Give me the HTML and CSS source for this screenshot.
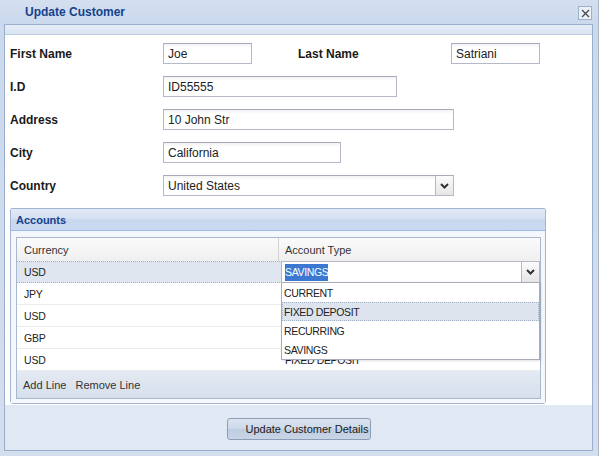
FILE: index.html
```html
<!DOCTYPE html>
<html>
<head>
<meta charset="utf-8">
<title>Update Customer</title>
<link rel="stylesheet" href="styles.css">
</head>
<body>
<div class="window">
  <div class="win-header">
    <span class="win-title">Update Customer</span>
    <span class="win-close"><svg width="9" height="9" viewBox="0 0 9 9"><path d="M1 1 L8 8 M8 1 L1 8" stroke="#4a4a4a" stroke-width="1.3" fill="none"/></svg></span>
  </div>
  <div class="win-body">
    <div class="strip"></div>
    <div class="form">
      <div class="row">
        <label class="lbl">First Name</label><div class="field w-short">Joe</div>
        <label class="lbl lbl-second">Last Name</label><div class="field w-short">Satriani</div>
      </div>
      <div class="row">
        <label class="lbl">I.D</label><div class="field w-id">ID55555</div>
      </div>
      <div class="row">
        <label class="lbl">Address</label><div class="field w-long">10 John Str</div>
      </div>
      <div class="row">
        <label class="lbl">City</label><div class="field w-city">California</div>
      </div>
      <div class="row">
        <label class="lbl">Country</label>
        <div class="field combo w-long"><span class="combo-text">United States</span><span class="trigger"><svg width="9" height="6" viewBox="0 0 9 6"><polyline points="1,1 4.5,4.5 8,1" stroke="#333" stroke-width="2" fill="none"/></svg></span></div>
      </div>
      <div class="panel">
        <div class="panel-head">Accounts</div>
        <div class="panel-body">
          <div class="grid">
            <div class="grid-head"><div class="col c1">Currency</div><div class="col c2">Account Type</div></div>
            <div class="grid-row selected">
              <div class="cell c1">USD</div>
              <div class="cell c2 editing">
                <div class="editor"><span class="editor-text"><span class="sel">SAVINGS</span></span><span class="trigger"><svg width="9" height="6" viewBox="0 0 9 6"><polyline points="1,1 4.5,4.5 8,1" stroke="#333" stroke-width="2" fill="none"/></svg></span></div>
                <div class="dropdown">
                  <div class="item">CURRENT</div>
                  <div class="item hover">FIXED DEPOSIT</div>
                  <div class="item">RECURRING</div>
                  <div class="item">SAVINGS</div>
                </div>
              </div>
            </div>
            <div class="grid-row"><div class="cell c1">JPY</div><div class="cell c2"></div></div>
            <div class="grid-row"><div class="cell c1">USD</div><div class="cell c2"></div></div>
            <div class="grid-row"><div class="cell c1">GBP</div><div class="cell c2"></div></div>
            <div class="grid-row"><div class="cell c1">USD</div><div class="cell c2">FIXED DEPOSIT</div></div>
            <div class="grid-tbar"><span>Add Line</span><span>Remove Line</span></div>
          </div>
        </div>
      </div>
    </div>
    <div class="footer"><button class="btn">Update Customer Details</button></div>
  </div>
</div>
</body>
</html>
```
FILE: styles.css
```css
body {
  margin: 0;
}
.window {
  width: 599px;
  height: 456px;
  box-sizing: border-box;
  background: linear-gradient(#d4dff0, #cbd9ed 24px, #d3deef);
  border-right: 1px solid #a9b4c4;
  display: flex;
  flex-direction: column;
  font-family: "Liberation Sans", Arial, sans-serif;
  color: #222;
}
.win-header {
  height: 24px;
  flex: none;
  display: flex;
  align-items: center;
  justify-content: space-between;
  padding: 0 6px 0 25px;
}
.win-title {
  font-weight: bold;
  font-size: 12px;
  color: #15428b;
}
.win-close {
  width: 14px;
  height: 14px;
  box-sizing: border-box;
  border: 1px solid #9fb0c8;
  background: #eaf0f8;
  display: flex;
  align-items: center;
  justify-content: center;
  margin-top: 2px;
}
.win-body {
  flex: 1;
  margin: 0 5px 5px 4px;
  border: 1px solid #99aecb;
  background: #fff;
  display: flex;
  flex-direction: column;
}
.strip {
  height: 9px;
  flex: none;
  background: linear-gradient(#e5ecf7, #dae4f2);
  border-bottom: 1px solid #b9cbe4;
}
.form {
  flex: 1;
  padding: 8px 0 0 5px;
  display: flex;
  flex-direction: column;
  gap: 12px;
}
.row {
  display: flex;
  align-items: center;
  height: 21px;
}
.lbl {
  width: 153px;
  flex: none;
  font-weight: bold;
  font-size: 12px;
  color: #1a1a1a;
}
.lbl-second {
  margin-left: 46px;
}
.field {
  height: 21px;
  box-sizing: border-box;
  border: 1px solid #b5b8c8;
  border-top-color: #a7aab8;
  background: linear-gradient(#f2f2f2, #fff 4px);
  font-size: 12px;
  padding-left: 4px;
  display: flex;
  align-items: center;
  color: #222;
}
.w-short { width: 89px; }
.w-id { width: 234px; }
.w-long { width: 291px; }
.w-city { width: 178px; }
.combo {
  padding-right: 0;
}
.combo-text {
  flex: 1;
}
.trigger {
  width: 17px;
  align-self: stretch;
  border-left: 1px solid #b5b8c8;
  background: linear-gradient(#fbfbfb, #e6e6e6);
  display: flex;
  align-items: center;
  justify-content: center;
}
.panel {
  width: 536px;
  height: 196px;
  box-sizing: border-box;
  border: 1px solid #a3b5ce;
  border-radius: 2px 2px 3px 3px;
  display: flex;
  flex-direction: column;
}
.panel-head {
  height: 22px;
  box-sizing: border-box;
  border-bottom: 1px solid #99bbe8;
  background: linear-gradient(#e1eaf7, #d5e1f2 45%, #c6d7ef 52%, #cadaf0);
  font-weight: bold;
  font-size: 11px;
  color: #15428b;
  padding-left: 5px;
  display: flex;
  align-items: center;
}
.panel-body {
  flex: 1;
  background: #f4f7fb;
  padding: 6px 4px 4px 5px;
}
.grid {
  height: 162px;
  box-sizing: border-box;
  border: 1px solid #a8b8cd;
  background: #fff;
  display: flex;
  flex-direction: column;
}
.grid-head {
  height: 24px;
  box-sizing: border-box;
  border-bottom: 1px solid #d0d0d0;
  background: linear-gradient(#fbfbfb, #efefef);
  display: flex;
  font-size: 11px;
  color: #333;
}
.col {
  display: flex;
  align-items: center;
}
.col.c1 {
  width: 262px;
  box-sizing: border-box;
  border-right: 1px solid #d3d3d3;
  padding-left: 7px;
}
.col.c2 {
  flex: 1;
  padding-left: 6px;
}
.grid-row {
  height: 22px;
  box-sizing: border-box;
  border-bottom: 1px solid #ececec;
  display: flex;
  align-items: center;
  font-size: 10.5px;
  letter-spacing: -0.2px;
  color: #222;
}
.grid-row.selected {
  background: #dfe6f0;
  border-top: 1px dotted #a3b3c9;
  border-bottom: 1px dotted #a3b3c9;
  height: 22px;
  margin-top: -1px;
}
.cell.c1 {
  width: 262px;
  padding-left: 7px;
  box-sizing: border-box;
}
.cell.c2 {
  flex: 1;
  padding-left: 6px;
  letter-spacing: -0.35px;
}
.cell.editing {
  position: relative;
  align-self: stretch;
}
.editor {
  position: absolute;
  left: 2px;
  right: 0;
  top: -1px;
  height: 22px;
  box-sizing: border-box;
  border: 1px solid #b5b8c8;
  background: #fff;
  display: flex;
  align-items: center;
}
.editor-text {
  flex: 1;
  padding-left: 3px;
}
.sel {
  background: #3c78d2;
  color: #fff;
  line-height: 17px;
  display: inline-block;
}
.dropdown {
  position: absolute;
  left: 2px;
  right: 0;
  top: 20px;
  box-sizing: border-box;
  border: 1px solid #a9acb8;
  background: #fff;
  box-shadow: 1px 1px 2px rgba(0, 0, 0, 0.12);
  z-index: 2;
}
.item {
  height: 19px;
  box-sizing: border-box;
  border: 1px dotted transparent;
  padding-left: 1px;
  display: flex;
  align-items: center;
  color: #222;
}
.item.hover {
  background: #dee4ed;
  border-color: #a3b3c9;
}
.grid-tbar {
  flex: 1;
  background: linear-gradient(#e4eaf3, #d6dfeb);
  display: flex;
  align-items: center;
  gap: 9px;
  padding-left: 6px;
  font-size: 11px;
  color: #333;
}
.footer {
  height: 45px;
  flex: none;
  background: #e0e8f4;
  display: flex;
  justify-content: center;
  align-items: flex-start;
}
.btn {
  margin-top: 13px;
  width: 144px;
  height: 22px;
  box-sizing: border-box;
  border: 1px solid #8d9db5;
  border-radius: 3px;
  background: linear-gradient(#dbe4f0, #cdd9ea 48%, #bfcde2 52%, #c8d5e7);
  font-family: "Liberation Sans", Arial, sans-serif;
  font-size: 11px;
  color: #1a1a1a;
  padding: 0 3px 0 18px;
  text-align: left;
  white-space: nowrap;
}
```
